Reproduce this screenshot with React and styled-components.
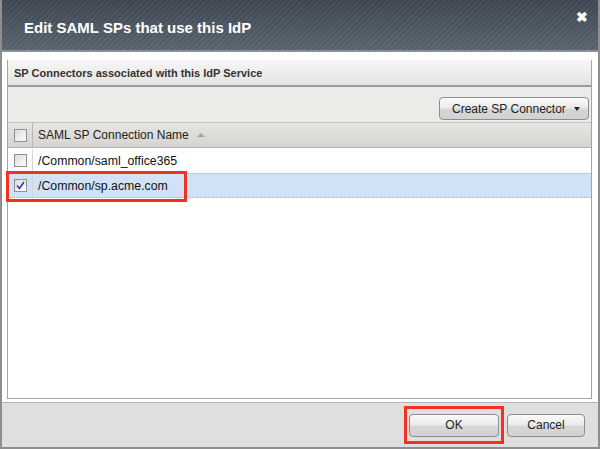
import React from "react";
import styled, { createGlobalStyle } from "styled-components";

const Global = createGlobalStyle`
  html, body { margin: 0; padding: 0; background: #ffffff; }
  body { font-family: Arial, "Liberation Sans", sans-serif; }
  * { box-sizing: border-box; }
`;

const Dialog = styled.div`
  width: 600px;
  height: 449px;
  display: flex;
  flex-direction: column;
  border: 2px solid #8e8e8e;
  border-top: none;
  background: #ffffff;
`;

const TitleBar = styled.div`
  height: 52px;
  flex: none;
  display: flex;
  align-items: center;
  justify-content: space-between;
  padding: 0 10px 0 22px;
  background:
    repeating-linear-gradient(135deg, rgba(255,255,255,0.035) 0 2px, rgba(0,0,0,0.035) 2px 4px),
    linear-gradient(#3e4752, #5a6571);
  border-bottom: 2px solid #8e8e8e;
`;

const Title = styled.h1`
  margin: 0;
  font-size: 15px;
  font-weight: bold;
  color: #ffffff;
  margin-top: 5px;
`;

const Close = styled.span`
  align-self: flex-start;
  margin-top: 10px;
  color: #ffffff;
  font-size: 14px;
  font-weight: bold;
  line-height: 1;
`;

const Body = styled.div`
  flex: 1;
  padding: 8px 6px 3px 5px;
  display: flex;
  background: #ffffff;
`;

const Panel = styled.div`
  flex: 1;
  display: flex;
  flex-direction: column;
  border: 1px solid #a3a3a3;
  border-top: none;
`;

const PanelHeader = styled.div`
  height: 27px;
  display: flex;
  align-items: center;
  padding-left: 6px;
  font-size: 11px;
  font-weight: bold;
  color: #333;
  background: linear-gradient(#f7f7f7, #e3e3e3);
  border-bottom: 2px solid #9a9a9a;
`;

const Toolbar = styled.div`
  height: 36px;
  display: flex;
  justify-content: flex-end;
  align-items: flex-end;
  padding: 0 2px 2px 0;
  background: #ecebe7;
  border-bottom: 1px solid #c2c1bd;
`;

const Button = styled.button`
  height: 23px;
  padding: 0 ${p => p.$pr || 0}px 0 ${p => p.$pl || 0}px;
  width: ${p => (p.$w ? `${p.$w}px` : "auto")};
  border: 1px solid #8d8d8d;
  border-radius: 4px;
  background: linear-gradient(#fafafa 0%, #ececec 45%, #d6d6d6 55%, #d2d2d2 100%);
  font-family: Arial, "Liberation Sans", sans-serif;
  font-size: 12px;
  color: #222;
  display: flex;
  align-items: center;
  justify-content: ${p => (p.$split ? "space-between" : "center")};
`;

const Caret = styled.span`
  width: 0;
  height: 0;
  border-left: 3px solid transparent;
  border-right: 3px solid transparent;
  border-top: 4px solid #222;
`;

const Table = styled.div`
  flex: 1;
  display: flex;
  flex-direction: column;
  background: #ffffff;
`;

const HeaderRow = styled.div`
  height: 25px;
  display: flex;
  background: linear-gradient(#e6e5e1, #d5d4d0);
  border-bottom: 1px solid #b4b3af;
`;

const Row = styled.div`
  height: 25px;
  display: flex;
  background: ${p => (p.$selected ? "#d1e2f7" : "#ffffff")};
  border-top: 1px dotted ${p => (p.$selected ? "#a9b4c2" : "transparent")};
  border-bottom: 1px dotted ${p => (p.$selected ? "#a9b4c2" : "transparent")};
`;

const CheckCell = styled.div`
  width: 25px;
  flex: none;
  display: flex;
  align-items: center;
  justify-content: center;
  border-right: 1px solid ${p => (p.$head ? "#b8b7b3" : "#d4d4d4")};
`;

const NameCell = styled.div`
  flex: 1;
  display: flex;
  align-items: center;
  padding-left: 5px;
  font-size: 12.3px;
  color: #111;
`;

const HeadText = styled.span`
  font-size: 12px;
  color: #222;
`;

const SortArrow = styled.span`
  margin-left: 8px;
  width: 0;
  height: 0;
  border-left: 4px solid transparent;
  border-right: 4px solid transparent;
  border-bottom: 4px solid #a5a5a5;
`;

const Box = styled.span`
  width: 13px;
  height: 13px;
  border: 1px solid #8f8f8f;
  background: linear-gradient(135deg, #dcdcdc, #fdfdfd);
  display: flex;
  align-items: center;
  justify-content: center;
`;

const Highlight = styled.div`
  position: relative;
  display: flex;
  flex: 1;
  &::after {
    content: "";
    position: absolute;
    left: -2px;
    top: -3px;
    width: 175px;
    bottom: -5px;
    border: 3px solid #f2321f;
    pointer-events: none;
  }
`;

const Footer = styled.div`
  height: 45px;
  flex: none;
  display: flex;
  justify-content: flex-end;
  align-items: center;
  gap: 8px;
  padding: 0 13px 0 0;
  background: #dfdfdf;
  border-top: 1px solid #b5b5b5;
`;

const OkWrap = styled.div`
  position: relative;
  &::after {
    content: "";
    position: absolute;
    left: -5px;
    right: -5px;
    top: -8px;
    bottom: -7px;
    border: 3px solid #f2321f;
    pointer-events: none;
  }
`;

const Check = () => (
  <svg width="11" height="11" viewBox="0 0 11 11">
    <path d="M2 5.5 L4.5 8.5 L9 2" fill="none" stroke="#2a3f9b" strokeWidth="1.6" />
  </svg>
);

export default function App() {
  return (
    <>
      <Global />
      <Dialog>
        <TitleBar>
          <Title>Edit SAML SPs that use this IdP</Title>
          <Close>✖</Close>
        </TitleBar>
        <Body>
          <Panel>
            <PanelHeader>SP Connectors associated with this IdP Service</PanelHeader>
            <Toolbar>
              <Button $w={150} $pl={12} $pr={8} $split>
                Create SP Connector <Caret />
              </Button>
            </Toolbar>
            <Table>
              <HeaderRow>
                <CheckCell $head>
                  <Box />
                </CheckCell>
                <NameCell>
                  <HeadText>SAML SP Connection Name</HeadText>
                  <SortArrow />
                </NameCell>
              </HeaderRow>
              <Row>
                <CheckCell>
                  <Box />
                </CheckCell>
                <NameCell>/Common/saml_office365</NameCell>
              </Row>
              <Row $selected>
                <Highlight>
                  <CheckCell>
                    <Box>
                      <Check />
                    </Box>
                  </CheckCell>
                  <NameCell>/Common/sp.acme.com</NameCell>
                </Highlight>
              </Row>
            </Table>
          </Panel>
        </Body>
        <Footer>
          <OkWrap>
            <Button $w={90}>OK</Button>
          </OkWrap>
          <Button $w={78}>Cancel</Button>
        </Footer>
      </Dialog>
    </>
  );
}
